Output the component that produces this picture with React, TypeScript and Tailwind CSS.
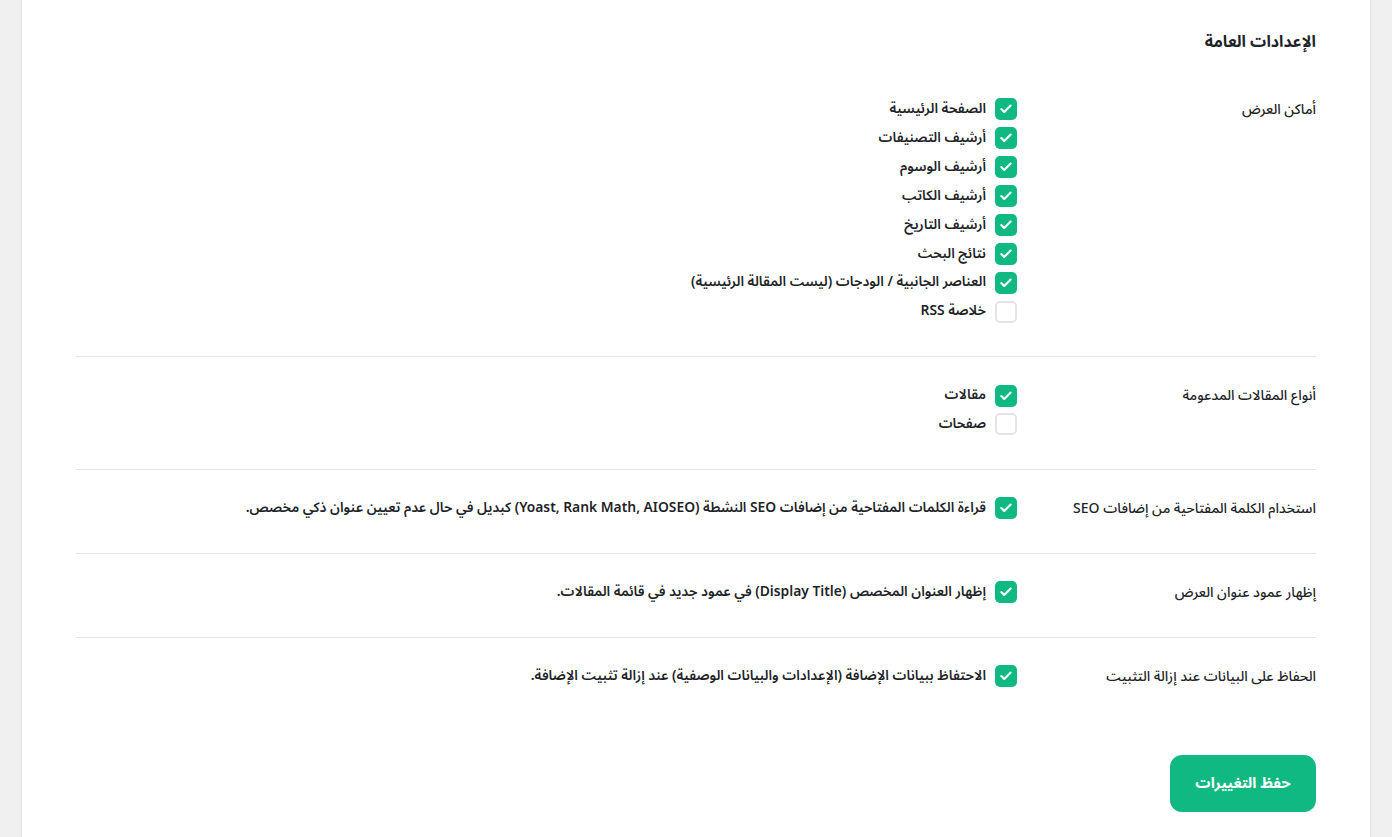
import { Check } from "lucide-react";

type Option = { label: string; checked: boolean };

const sections: { label: string; options: Option[] }[] = [
  {
    label: "أماكن العرض",
    options: [
      { label: "الصفحة الرئيسية", checked: true },
      { label: "أرشيف التصنيفات", checked: true },
      { label: "أرشيف الوسوم", checked: true },
      { label: "أرشيف الكاتب", checked: true },
      { label: "أرشيف التاريخ", checked: true },
      { label: "نتائج البحث", checked: true },
      { label: "العناصر الجانبية / الودجات (ليست المقالة الرئيسية)", checked: true },
      { label: "خلاصة RSS", checked: false },
    ],
  },
  {
    label: "أنواع المقالات المدعومة",
    options: [
      { label: "مقالات", checked: true },
      { label: "صفحات", checked: false },
    ],
  },
  {
    label: "استخدام الكلمة المفتاحية من إضافات SEO",
    options: [
      {
        label:
          "قراءة الكلمات المفتاحية من إضافات SEO النشطة (Yoast, Rank Math, AIOSEO) كبديل في حال عدم تعيين عنوان ذكي مخصص.",
        checked: true,
      },
    ],
  },
  {
    label: "إظهار عمود عنوان العرض",
    options: [
      { label: "إظهار العنوان المخصص (Display Title) في عمود جديد في قائمة المقالات.", checked: true },
    ],
  },
  {
    label: "الحفاظ على البيانات عند إزالة التثبيت",
    options: [
      { label: "الاحتفاظ ببيانات الإضافة (الإعدادات والبيانات الوصفية) عند إزالة تثبيت الإضافة.", checked: true },
    ],
  },
];

function Checkbox({ checked }: { checked: boolean }) {
  return checked ? (
    <span className="flex h-[22px] w-[22px] shrink-0 items-center justify-center rounded-[5px] bg-[#10b981]">
      <Check className="h-[14px] w-[14px] text-white" strokeWidth={3.6} />
    </span>
  ) : (
    <span className="h-[22px] w-[22px] shrink-0 rounded-[5px] border-2 border-[#e2e4e8] bg-white" />
  );
}

export default function App() {
  return (
    <div
      dir="rtl"
      className="min-h-screen bg-[#f0f0f0] px-[22px] text-[#1d2327]"
      style={{ fontFamily: '"Noto Sans Arabic", "Noto Sans", "DejaVu Sans", sans-serif' }}
    >
      <div className="min-h-[860px] bg-white px-[54px] pt-[28px] pb-[40px] shadow-[0_0_3px_rgba(0,0,0,0.12)]">
        <h2 className="mb-[15px] text-[16px] font-bold leading-[28px]">الإعدادات العامة</h2>

        <div className="divide-y divide-[#e5e7eb]">
          {sections.map((section) => (
            <div key={section.label} className="flex pt-[24px] pb-[30px]">
              <div className="w-[299px] shrink-0 text-[14px] font-medium leading-[29px]">
                {section.label}
              </div>
              <div className="flex flex-col">
                {section.options.map((opt) => (
                  <label
                    key={opt.label}
                    className="flex h-[28.9px] items-center gap-[9px] text-[13.8px] font-semibold"
                  >
                    <Checkbox checked={opt.checked} />
                    <span>{opt.label}</span>
                  </label>
                ))}
              </div>
            </div>
          ))}
        </div>

        <button className="mt-[34px] h-[57px] w-[146px] rounded-[12px] bg-[#10b981] text-[15px] font-bold text-white">
          حفظ التغييرات
        </button>
      </div>
    </div>
  );
}
